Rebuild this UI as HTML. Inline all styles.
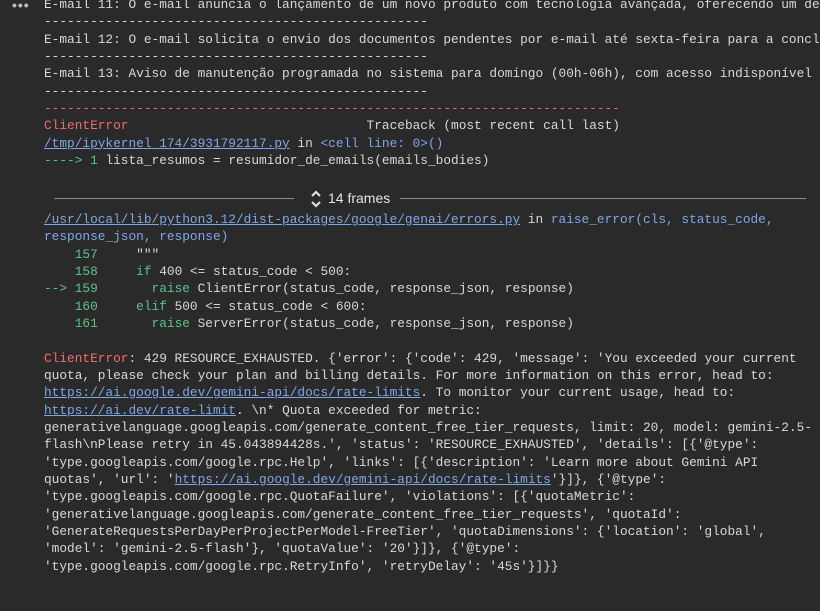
<!DOCTYPE html>
<html><head><meta charset="utf-8"><style>
html,body{margin:0;padding:0;background:#2a2a2a;width:820px;height:611px;overflow:hidden}
pre{margin:0;position:absolute;left:44px;font-family:"Liberation Mono",monospace;font-size:12.8px;line-height:17.33px;color:#d8d8d8;white-space:pre}
.r{color:#f06b70}.l{color:#7fa7e8;text-decoration:underline}.g{color:#5cc38a}.b{color:#7fa7e8}
.dots{position:absolute;left:12px;top:-3px;color:#bbb;font:bold 14px "Liberation Sans",sans-serif;letter-spacing:1px}
.fr{position:absolute;top:189px;left:0;width:820px;height:20px}
.ln{position:absolute;top:9px;height:1px;background:#8a8a8a}
.ft{position:absolute;left:328px;top:1px;font:14px "Liberation Sans",sans-serif;color:#e3e3e3}
</style></head><body>
<div class="dots">•••</div>
<pre style="top:-4px">E-mail 11: O e-mail anuncia o lançamento de um novo produto com tecnologia avançada, oferecendo um de
--------------------------------------------------
E-mail 12: O e-mail solicita o envio dos documentos pendentes por e-mail até sexta-feira para a conclu
--------------------------------------------------
E-mail 13: Aviso de manutenção programada no sistema para domingo (00h-06h), com acesso indisponível
--------------------------------------------------
<span class="r">---------------------------------------------------------------------------</span>
<span class="r">ClientError</span>                               Traceback (most recent call last)
<span class="l">/tmp/ipykernel_174/3931792117.py</span> in <span class="b">&lt;cell line: 0&gt;()</span>
<span class="g">----&gt; 1</span> lista_resumos = resumidor_de_emails(emails_bodies)</pre>
<div class="fr">
<div class="ln" style="left:54px;width:240px"></div>
<svg style="position:absolute;left:310px;top:0" width="12" height="20" viewBox="0 0 12 20"><path d="M2 7 L6 3 L10 7 M2 13 L6 17 L10 13" stroke="#ddd" stroke-width="2.2" fill="none"/></svg>
<div class="ft">14 frames</div>
<div class="ln" style="left:400px;width:406px"></div>
</div>
<pre style="top:211px"><span class="l">/usr/local/lib/python3.12/dist-packages/google/genai/errors.py</span> in <span class="b">raise_error(cls, status_code,</span>
<span class="b">response_json, response)</span>
<span class="g">    157</span>     """
<span class="g">    158</span>     <span class="g">if</span> 400 &lt;= status_code &lt; 500:
<span class="g">--&gt; 159</span>       <span class="g">raise</span> ClientError(status_code, response_json, response)
<span class="g">    160</span>     <span class="g">elif</span> 500 &lt;= status_code &lt; 600:
<span class="g">    161</span>       <span class="g">raise</span> ServerError(status_code, response_json, response)

<span class="r">ClientError</span>: 429 RESOURCE_EXHAUSTED. {'error': {'code': 429, 'message': 'You exceeded your current
quota, please check your plan and billing details. For more information on this error, head to:
<span class="l">https://ai.google.dev/gemini-api/docs/rate-limits</span>. To monitor your current usage, head to:
<span class="l">https://ai.dev/rate-limit</span>. \n* Quota exceeded for metric:
generativelanguage.googleapis.com/generate_content_free_tier_requests, limit: 20, model: gemini-2.5-
flash\nPlease retry in 45.043894428s.', 'status': 'RESOURCE_EXHAUSTED', 'details': [{'@type':
'type.googleapis.com/google.rpc.Help', 'links': [{'description': 'Learn more about Gemini API
quotas', 'url': '<span class="l">https://ai.google.dev/gemini-api/docs/rate-limits</span>'}]}, {'@type':
'type.googleapis.com/google.rpc.QuotaFailure', 'violations': [{'quotaMetric':
'generativelanguage.googleapis.com/generate_content_free_tier_requests', 'quotaId':
'GenerateRequestsPerDayPerProjectPerModel-FreeTier', 'quotaDimensions': {'location': 'global',
'model': 'gemini-2.5-flash'}, 'quotaValue': '20'}]}, {'@type':
'type.googleapis.com/google.rpc.RetryInfo', 'retryDelay': '45s'}]}}</pre>
</body></html>
